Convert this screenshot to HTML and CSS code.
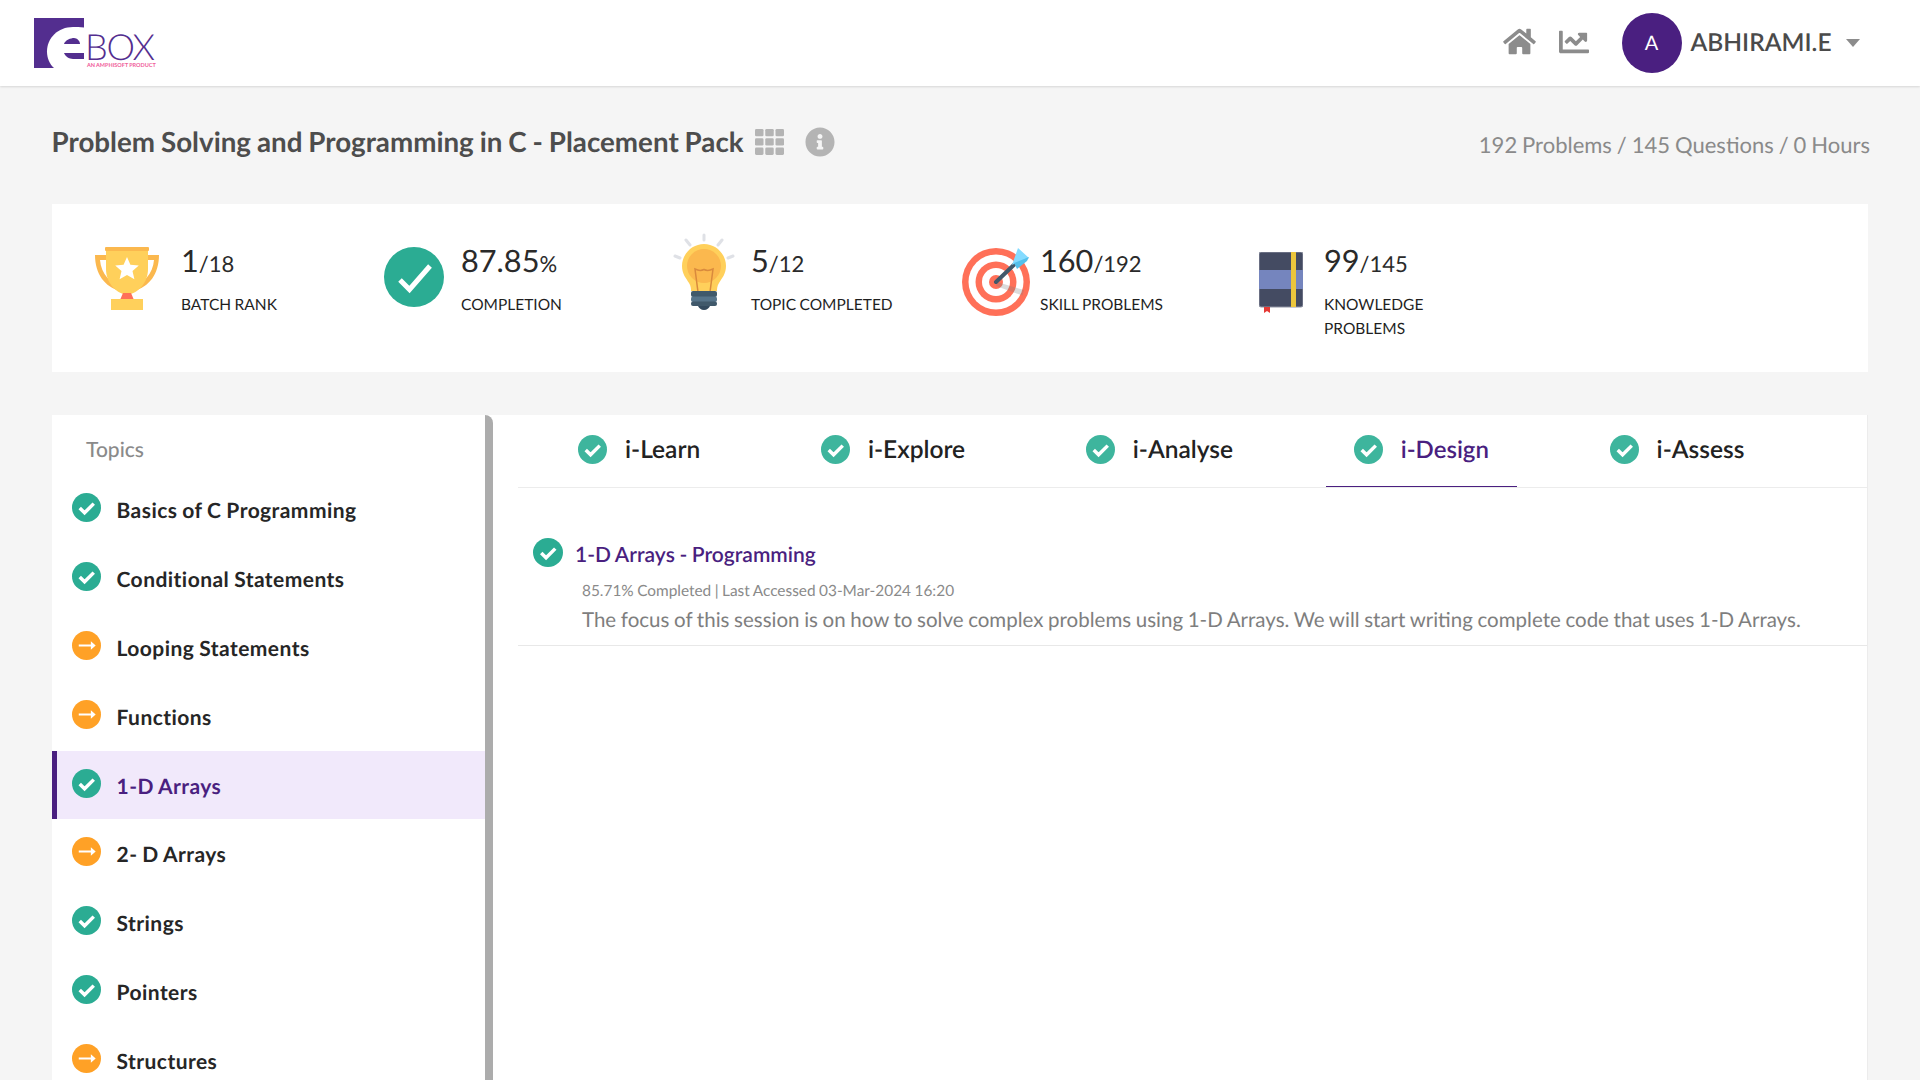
FILE: index.html
```html
<!DOCTYPE html>
<html lang="en">
<head>
<meta charset="utf-8">
<title>Problem Solving and Programming in C - Placement Pack</title>
<link rel="stylesheet" href="styles.css">
</head>
<body>
<svg class="defs" width="0" height="0" aria-hidden="true">
  <symbol id="check" viewBox="0 0 30 30">
    <path d="M8 15.500l5 5 9.500-9.500" fill="none" stroke="#fff" stroke-width="3.600"/>
  </symbol>
  <symbol id="arrow" viewBox="0 0 30 30">
    <path d="M7 14h12.500v-3.500l5 4.500-5 4.500V16H7z" fill="#fff"/>
  </symbol>
</svg>

<header class="topbar">
  <a class="logo" href="#">
    <svg class="logo-mark" width="50" height="50" viewBox="0 0 50 50">
      <rect width="50" height="50" fill="#532e8f"/>
      <path d="M50 9.500C46 9 42 9 39 9 24 9 13 20 13 33.500 13 40 15.500 46 20 50H50z" fill="#fff"/>
      <path d="M30 26c1-4 7-6 10-6 3 0 6 3 6 6z" fill="#532e8f"/>
      <path d="M30 35h20v6H39c-4 0-8-3-9-6z" fill="#532e8f"/>
    </svg>
    <span class="logo-word">
      <span class="logo-box">BOX</span>
      <span class="logo-tag">AN AMPHISOFT PRODUCT</span>
    </span>
  </a>
  <nav class="top-nav">
    <svg class="ico-home" viewBox="0 0 576 512"><path d="M280.37 148.26L96 300.11V464a16 16 0 0 0 16 16l112.06-.29a16 16 0 0 0 15.92-16V368a16 16 0 0 1 16-16h64a16 16 0 0 1 16 16v95.64a16 16 0 0 0 16 16.05L464 480a16 16 0 0 0 16-16V300L295.67 148.26a12.19 12.19 0 0 0-15.3 0zM571.6 251.47L488 182.56V44.05a12 12 0 0 0-12-12h-56a12 12 0 0 0-12 12v72.61L318.47 43a48 48 0 0 0-61 0L4.34 251.47a12 12 0 0 0-1.6 16.9l25.5 31A12 12 0 0 0 45.15 301l235.22-193.74a12.19 12.19 0 0 1 15.3 0L530.9 301a12 12 0 0 0 16.9-1.6l25.5-31a12 12 0 0 0-1.7-16.93z"/></svg>
    <svg class="ico-chart" viewBox="0 0 512 512"><path d="M496 384H64V80c0-8.840-7.160-16-16-16H16C7.160 64 0 71.160 0 80v336c0 17.670 14.330 32 32 32h464c8.840 0 16-7.160 16-16v-32c0-8.840-7.160-16-16-16zM464 96H345.940c-21.380 0-32.090 25.850-16.970 40.970l32.400 32.400L288 242.750l-73.370-73.370c-12.500-12.500-32.760-12.500-45.250 0l-68.690 68.690c-6.250 6.250-6.250 16.380 0 22.630l22.620 22.620c6.250 6.250 16.380 6.250 22.630 0L192 237.250l73.370 73.370c12.500 12.500 32.760 12.500 45.250 0l96-96 32.400 32.400c15.120 15.120 40.970 4.410 40.970-16.970V112c0-8.840-7.160-16-16-16z"/></svg>
    <span class="avatar">A</span>
    <span class="user-name">ABHIRAMI.E</span>
    <span class="caret"></span>
  </nav>
</header>

<main class="page">
  <section class="title-row">
    <div class="title-left">
      <h1 class="course-title">Problem Solving and Programming in C - Placement Pack</h1>
      <svg class="ico-grid" viewBox="0 0 29 26" fill="#b4b4b4">
        <rect x="0" y="0" width="8.500" height="7.300" rx="1.300"/><rect x="10.250" y="0" width="8.500" height="7.300" rx="1.300"/><rect x="20.500" y="0" width="8.500" height="7.300" rx="1.300"/>
        <rect x="0" y="9.300" width="8.500" height="7.300" rx="1.300"/><rect x="10.250" y="9.300" width="8.500" height="7.300" rx="1.300"/><rect x="20.500" y="9.300" width="8.500" height="7.300" rx="1.300"/>
        <rect x="0" y="18.600" width="8.500" height="7.300" rx="1.300"/><rect x="10.250" y="18.600" width="8.500" height="7.300" rx="1.300"/><rect x="20.500" y="18.600" width="8.500" height="7.300" rx="1.300"/>
      </svg>
      <svg class="ico-info" viewBox="0 0 512 512" fill="#b4b4b4"><path d="M256 8C119 8 8 119 8 256s111 248 248 248 248-111 248-248S393 8 256 8zm0 110c23.200 0 42 18.800 42 42s-18.800 42-42 42-42-18.800-42-42 18.800-42 42-42zm56 254c0 6.600-5.400 12-12 12h-88c-6.600 0-12-5.400-12-12v-24c0-6.600 5.400-12 12-12h12v-64h-12c-6.600 0-12-5.400-12-12v-24c0-6.600 5.400-12 12-12h64c6.600 0 12 5.400 12 12v100h12c6.600 0 12 5.400 12 12z"/></svg>
    </div>
    <p class="course-meta">192 Problems / 145 Questions / 0 Hours</p>
  </section>

  <section class="stats">
    <div class="stat">
      <svg class="stat-ico ico-trophy" viewBox="0 0 64 64">
        <path d="M0 8h12v5H5c1 14 11 24 23 27l-3 4C10 40 0 27 0 8zM64 8H52v5h7c-1 14-11 24-23 27l3 4c15-4 25-17 25-36z" fill="#fbb84e"/>
        <path d="M11 4h42v18c0 13-9 24-21 26C20 46 11 35 11 22z" fill="#ffd05b"/>
        <rect x="10" y="0" width="44" height="4" rx="1" fill="#fbb84e"/>
        <path d="M28 46h8l3 7H25z" fill="#ff7058"/>
        <rect x="16" y="52" width="32" height="11" fill="#ffd05b"/>
        <path d="M32 10l3.400 7.700 8.400.8-6.300 5.600 1.900 8.200-7.400-4.300-7.400 4.300 1.900-8.200-6.300-5.600 8.400-.8z" fill="#fff"/>
      </svg>
      <div class="stat-body">
        <p class="stat-value">1<small>/18</small></p>
        <p class="stat-label">BATCH RANK</p>
      </div>
    </div>
    <div class="stat">
      <svg class="stat-ico ico-done" viewBox="0 0 60 60">
        <circle cx="30" cy="30" r="30" fill="#2bac93"/>
        <path d="M16 33l9.500 9.500L46 19" fill="none" stroke="#fff" stroke-width="5"/>
      </svg>
      <div class="stat-body">
        <p class="stat-value">87.85<small>%</small></p>
        <p class="stat-label">COMPLETION</p>
      </div>
    </div>
    <div class="stat">
      <svg class="stat-ico ico-bulb" viewBox="0 0 62 77">
        <g stroke="#dfe1e6" stroke-width="3" stroke-linecap="round">
          <path d="M31 2v5M13 7l4 5M49 7l-4 5M2 23l5 2M60 23l-5 2"/>
        </g>
        <path d="M31 11c12 0 22 10 22 22 0 8-4 12-7 17-2 3-2 6-2 8H18c0-2 0-5-2-8-3-5-7-9-7-17 0-12 10-22 22-22z" fill="#ffd05b"/>
        <circle cx="31" cy="33" r="17" fill="#fbb84e"/>
        <path d="M25 59L22 36c3 1.500 6 2 9 .5 3 1.500 6 1 9-.5l-3 23" fill="none" stroke="#d98a3d" stroke-width="1.500"/>
        <rect x="18" y="58" width="26" height="6" rx="2" fill="#40596b"/>
        <rect x="18" y="63.500" width="26" height="5.500" rx="2" fill="#56748a"/>
        <rect x="18" y="68.500" width="26" height="4.500" rx="2" fill="#40596b"/>
        <path d="M25 73h12c-1 2-3 4-6 4s-5-2-6-4z" fill="#334a5e"/>
      </svg>
      <div class="stat-body">
        <p class="stat-value">5<small>/12</small></p>
        <p class="stat-label">TOPIC COMPLETED</p>
      </div>
    </div>
    <div class="stat">
      <svg class="stat-ico ico-target" viewBox="0 0 68 69">
        <circle cx="34" cy="35" r="34" fill="#ff7058"/>
        <circle cx="34" cy="35" r="27.500" fill="#fff"/>
        <circle cx="34" cy="35" r="20.500" fill="#ff7058"/>
        <circle cx="34" cy="35" r="14" fill="#fff"/>
        <circle cx="34" cy="35" r="7" fill="#ff7058"/>
        <path d="M35 35l27 8-1.500 5.500L34 39z" fill="#7f7f7f" opacity=".28"/>
        <path d="M34 35L56 14" stroke="#40596b" stroke-width="4" stroke-linecap="round"/>
        <path d="M50 17L56 0l11 10-15 6z" fill="#84dbff" transform="translate(0 1)"/>
        <path d="M52 16l15-6-2 4-10 8z" fill="#54c0eb"/>
      </svg>
      <div class="stat-body">
        <p class="stat-value">160<small>/192</small></p>
        <p class="stat-label">SKILL PROBLEMS</p>
      </div>
    </div>
    <div class="stat">
      <svg class="stat-ico ico-book" viewBox="0 0 44 61">
        <rect x="0" y="0" width="44" height="55" rx="2" fill="#444b62" stroke="#8f93a3"/>
        <rect x="0" y="18" width="44" height="19" fill="#7585be"/>
        <rect x="32" y="0" width="5" height="55" fill="#ecc63c"/>
        <path d="M5 55h6v6l-3-2-3 2z" fill="#e53935"/>
      </svg>
      <div class="stat-body stat-body-narrow">
        <p class="stat-value">99<small>/145</small></p>
        <p class="stat-label">KNOWLEDGE PROBLEMS</p>
      </div>
    </div>
  </section>

  <section class="panel">
    <aside class="sidebar">
      <h2 class="topics-head">Topics</h2>
      <ul class="topics">
        <li class="topic"><span class="badge done"><svg><use href="#check"/></svg></span>Basics of C Programming</li>
        <li class="topic"><span class="badge done"><svg><use href="#check"/></svg></span>Conditional Statements</li>
        <li class="topic"><span class="badge going"><svg><use href="#arrow"/></svg></span>Looping Statements</li>
        <li class="topic"><span class="badge going"><svg><use href="#arrow"/></svg></span>Functions</li>
        <li class="topic active"><span class="badge done"><svg><use href="#check"/></svg></span>1-D Arrays</li>
        <li class="topic"><span class="badge going"><svg><use href="#arrow"/></svg></span>2- D Arrays</li>
        <li class="topic"><span class="badge done"><svg><use href="#check"/></svg></span>Strings</li>
        <li class="topic"><span class="badge done"><svg><use href="#check"/></svg></span>Pointers</li>
        <li class="topic"><span class="badge going"><svg><use href="#arrow"/></svg></span>Structures</li>
      </ul>
    </aside>
    <div class="content">
      <div class="tabs">
        <div class="tab"><span class="badge done-soft"><svg><use href="#check"/></svg></span>i-Learn</div>
        <div class="tab"><span class="badge done-soft"><svg><use href="#check"/></svg></span>i-Explore</div>
        <div class="tab"><span class="badge done-soft"><svg><use href="#check"/></svg></span>i-Analyse</div>
        <div class="tab current"><span class="badge done-soft"><svg><use href="#check"/></svg></span>i-Design</div>
        <div class="tab"><span class="badge done-soft"><svg><use href="#check"/></svg></span>i-Assess</div>
      </div>
      <article class="session">
        <div class="session-head">
          <span class="badge done session-badge"><svg><use href="#check"/></svg></span>
          <h3 class="session-title">1-D Arrays - Programming</h3>
        </div>
        <p class="session-meta">85.71% Completed | Last Accessed 03-Mar-2024 16:20</p>
        <p class="session-desc">The focus of this session is on how to solve complex problems using 1-D Arrays. We will start writing complete code that uses 1-D Arrays.</p>
      </article>
    </div>
  </section>
</main>
</body>
</html>
```
FILE: styles.css
```css
* { box-sizing: border-box; word-spacing: -.03em; }
html, body { margin: 0; height: 100%; overflow: hidden; }
body {
  display: flex;
  flex-direction: column;
  background: #f5f5f5;
  color: #222;
  font-family: Lato, "Liberation Sans", sans-serif;
  text-rendering: geometricPrecision;
  -webkit-font-smoothing: antialiased;
}
p, h1, h2, h3, ul { margin: 0; padding: 0; }
ul { list-style: none; }
.defs { position: absolute; }

.topbar {
  flex: none;
  height: 86px;
  background: #fff;
  box-shadow: 0 1px 2px rgba(0,0,0,.12);
  display: flex;
  align-items: center;
  justify-content: space-between;
  padding: 0 60.500px 0 34px;
  position: relative;
}
.logo { display: flex; align-items: flex-start; height: 50px; text-decoration: none; }
.logo-mark { display: block; }
.logo-word { display: flex; flex-direction: column; margin-left: 1px; }
.logo-box {
  font-size: 36px; font-weight: 300; line-height: 26px; color: #532e8f;
  margin-top: 15px; letter-spacing: -1.300px;
}
.logo-tag {
  font-size: 5.500px; line-height: 6px; color: #f0609a; font-weight: 700;
  margin-top: 4px; margin-left: 2px; white-space: nowrap;
}

.top-nav { display: flex; align-items: center; }
.top-nav svg { fill: #8c8c8c; display: block; }
.ico-home { width: 33px; height: 29px; margin: -3px 23px 0 0; }
.ico-chart { width: 30px; height: 30px; margin: -2px 33px 0 0; }
.avatar {
  width: 60px; height: 60px; border-radius: 50%;
  background: #4a1f80; color: #fff;
  display: flex; align-items: center; justify-content: center;
  font-size: 20px; margin-right: 9px;
}
.user-name { font-size: 24.500px; font-weight: 600; color: #4a4a4a; margin-top: -2px; }
.caret {
  width: 0; height: 0; margin-left: 14px;
  border-left: 7px solid transparent; border-right: 7px solid transparent;
  border-top: 8px solid #8c8c8c;
}

.page {
  flex: 1; min-height: 0;
  display: flex; flex-direction: column;
  padding: 0 52px;
}
.title-row {
  flex: none; height: 118px;
  display: flex; align-items: center; justify-content: space-between;
  padding-bottom: 6px;
}
.title-left { display: flex; align-items: center; }
.course-title { font-size: 27.750px; font-weight: 700; color: #4d4d4d; white-space: nowrap; margin: -2px 0 0 -.5px; }
.ico-grid { width: 29px; height: 26px; margin-left: 11px; display: block; }
.ico-info { width: 30px; height: 30px; margin-left: 21px; display: block; }
.course-meta { font-size: 22px; color: #8a8a8a; margin: 4px -2px 0 0; }

.stats {
  flex: none; height: 168px;
  background: #fff;
  display: grid;
  grid-template-columns: 289px 289px 289px 297px 1fr;
  padding: 28px 0 0 43px;
}
.stat { display: flex; align-items: flex-start; }
.stat-ico { display: block; flex: none; }
.ico-trophy { width: 64px; height: 64px; margin: 15px 22px 0 0; }
.ico-done { width: 60px; height: 60px; margin: 15px 17px 0 0; }
.ico-bulb { width: 62px; height: 77px; margin: 1px 16px 0 0; }
.ico-target { width: 68px; height: 69px; margin: 15px 10px 0 0; }
.ico-book { width: 44px; height: 61px; margin: 20px 21px 0 0; }
.stat-value { font-size: 30.700px; line-height: 40px; margin-top: 9px; color: #2a2a2a; }
.stat-value small { font-size: 22px; }
.stat-label { font-size: 15.500px; line-height: 24px; margin-top: 9px; color: #1f1f1f; }
.stat-body-narrow { width: 120px; }

.panel {
  flex: 1; min-height: 0;
  margin-top: 43px;
  background: #fff;
  display: flex;
  overflow: hidden;
  border-right: 1px solid #ececec;
}
.sidebar {
  flex: none; width: 441px;
  border-right: 8px solid #acacac;
  border-top-right-radius: 8px;
  overflow: hidden;
}
.topics-head { font-size: 21px; font-weight: 500; color: #8a8a8a; height: 60px; line-height: 70px; padding-left: 34px; }
.topic {
  height: 68.900px;
  display: flex; align-items: center;
  padding: 2px 0 0 20px;
  font-size: 21px; font-weight: 700; letter-spacing: .45px; color: #262626;
}
.topic .badge { margin: -6px 15.500px 0 0; }
.topic.active {
  background: #f1e9fb; color: #4a1f80;
  border-left: 5px solid #4a1f80;
  padding-left: 15px;
}

.badge {
  flex: none; width: 29px; height: 29px; border-radius: 50%;
  display: block;
}
.badge svg { display: block; width: 100%; height: 100%; }
.done { background: #2bac93; }
.done-soft { background: #3eb59d; }
.going { background: #ffa126; }

.content { flex: 1; min-width: 0; padding-left: 25px; }
.tabs {
  display: flex; gap: 64.700px; height: 73px;
  padding-left: 32px;
  border-bottom: 1px solid #ececec;
}
.tab {
  display: flex; align-items: center;
  padding: 0 28px 2px;
  font-size: 24.500px; font-weight: 600; color: #222;
  height: 72px;
  border-bottom: 1px solid transparent;
}
.tab .badge { margin-right: 18px; }
.tab.current { color: #4a1f80; border-bottom-color: #4a1f80; font-size: 24px; }

.session {
  padding: 50px 0 0 15px;
  height: 158px;
  border-bottom: 1px solid #e8e8e8;
}
.session-head { display: flex; align-items: center; }
.session-badge { width: 30px; height: 29px; margin-right: 12px; }
.session-title { font-size: 21px; font-weight: 600; color: #4a1f80; margin-top: 3px; }
.session-meta { font-size: 15.400px; color: #8a8a8a; margin: 14px 0 0 49px; line-height: 20px; }
.session-desc { font-size: 20.500px; color: #7e7e7e; margin: 5px 0 0 49px; line-height: 28px; white-space: nowrap; }
```
